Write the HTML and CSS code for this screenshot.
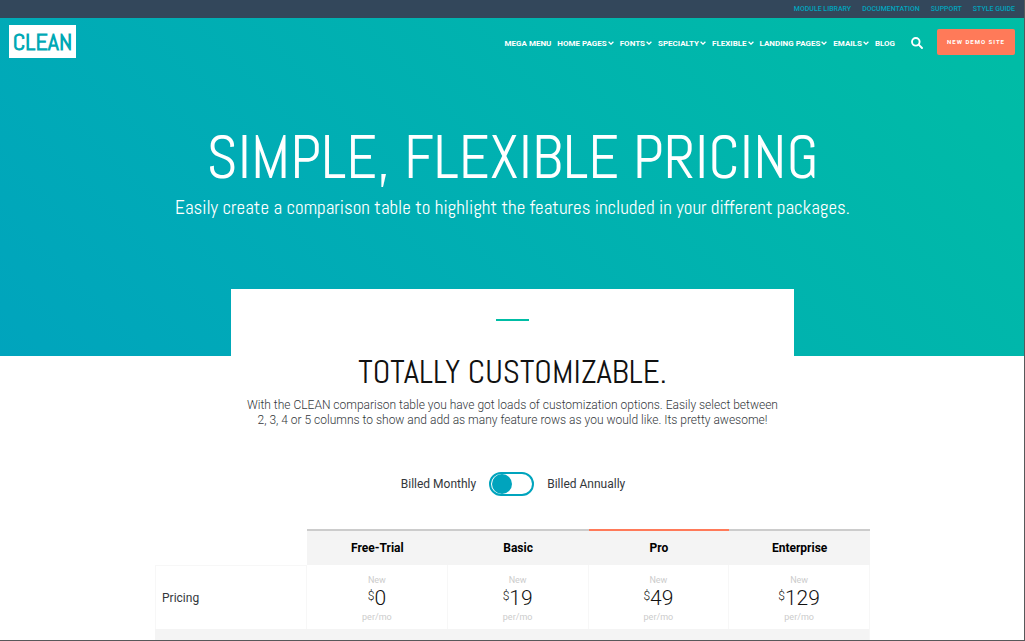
FILE: index.html
```html
<!DOCTYPE html>
<html lang="en">
<head>
<meta charset="utf-8">
<title>Clean – Pricing</title>
<link rel="stylesheet" href="styles.css">
</head>
<body>
<nav class="topbar" aria-label="Resources">
  <a href="#">Module Library</a>
  <a href="#">Documentation</a>
  <a href="#">Support</a>
  <a href="#">Style Guide</a>
</nav>
<div class="hero">
  <header class="header">
    <a class="logo" href="#">CLEAN</a>
    <nav class="menu" aria-label="Main">
      <a href="#">Mega Menu</a>
      <a href="#">Home Pages<svg class="caret" viewBox="0 0 6 4"><path d="M.6 .7 3 3.1 5.4 .7"/></svg></a>
      <a href="#">Fonts<svg class="caret" viewBox="0 0 6 4"><path d="M.6 .7 3 3.1 5.4 .7"/></svg></a>
      <a href="#">Specialty<svg class="caret" viewBox="0 0 6 4"><path d="M.6 .7 3 3.1 5.4 .7"/></svg></a>
      <a href="#">Flexible<svg class="caret" viewBox="0 0 6 4"><path d="M.6 .7 3 3.1 5.4 .7"/></svg></a>
      <a href="#">Landing Pages<svg class="caret" viewBox="0 0 6 4"><path d="M.6 .7 3 3.1 5.4 .7"/></svg></a>
      <a href="#">Emails<svg class="caret" viewBox="0 0 6 4"><path d="M.6 .7 3 3.1 5.4 .7"/></svg></a>
      <a href="#">Blog</a>
    </nav>
    <button class="search" type="button" aria-label="Search"><svg viewBox="0 0 12 12"><circle cx="4.8" cy="4.8" r="3.8"/><path d="M7.7 7.7 11 11"/></svg></button>
    <a class="cta" href="#">New Demo Site</a>
  </header>
  <div class="hero-text">
    <h1>Simple, Flexible Pricing</h1>
    <p>Easily create a comparison table to highlight the features included in your different packages.</p>
  </div>
</div>
<main>
  <section class="intro">
    <hr class="rule">
    <h2>Totally Customizable.</h2>
    <p>With the CLEAN comparison table you have got loads of customization options. Easily select between 2, 3, 4 or 5 columns to show and add as many feature rows as you would like. Its pretty awesome!</p>
  </section>
  <div class="billing">
    <label for="annual">Billed Monthly</label>
    <input class="switch" id="annual" type="checkbox" role="switch">
    <label for="annual">Billed Annually</label>
  </div>
  <table class="plans">
    <thead>
      <tr><td></td><th scope="col">Free-Trial</th><th scope="col">Basic</th><th class="featured" scope="col">Pro</th><th scope="col">Enterprise</th></tr>
    </thead>
    <tbody>
      <tr>
        <th scope="row">Pricing</th>
        <td><small>New</small><div class="price"><span>$</span>0</div><small>per/mo</small></td>
        <td><small>New</small><div class="price"><span>$</span>19</div><small>per/mo</small></td>
        <td><small>New</small><div class="price"><span>$</span>49</div><small>per/mo</small></td>
        <td><small>New</small><div class="price"><span>$</span>129</div><small>per/mo</small></td>
      </tr>
      <tr class="group"><td colspan="5"></td></tr>
    </tbody>
  </table>
</main>
</body>
</html>
```
FILE: styles.css
```css
* { box-sizing: border-box; }
body {
  margin: 0;
  background: #fff;
  color: #33373b;
  font-family: Roboto, "Liberation Sans", sans-serif;
}
body::after {
  content: "";
  position: fixed;
  inset: 0;
  border: solid #58585a;
  border-width: 0 1px 1px 0;
  pointer-events: none;
}
a { text-decoration: none; }
h1, h2, p { margin: 0; }
h1, h2, .hero-text p, .logo {
  font-family: "Abel", "Liberation Sans Narrow", Roboto, sans-serif;
}
.topbar {
  display: flex;
  justify-content: flex-end;
  gap: 11px;
  padding: 1px 10px 0;
  background: #33475b;
  font-size: 7px;
  font-weight: 500;
  line-height: 17px;
  text-transform: uppercase;
}
.topbar a { color: #00a4bd; }
.hero {
  height: 338px;
  background: linear-gradient(45deg, #00a4bd, #00bda5);
  color: #fff;
}
.header {
  display: flex;
  align-items: center;
  padding: 7px 10px 0 9px;
}
.logo {
  width: 67px;
  background: #fff;
  color: #00a9b5;
  font-size: 24px;
  font-weight: 700;
  line-height: 33px;
  text-align: center;
}
.menu {
  display: flex;
  gap: 6px;
  margin-left: auto;
  padding-top: 5px;
  font-size: 8px;
  font-weight: 700;
  line-height: 12px;
  text-transform: uppercase;
  white-space: nowrap;
}
.menu a { color: #fff; }
.caret {
  width: 6px;
  height: 4px;
  margin-left: 1px;
  vertical-align: 1px;
  fill: none;
  stroke: #fff;
  stroke-width: 1.3;
}
.search {
  width: 12px;
  height: 12px;
  margin: 2px 14px 0 16px;
  padding: 0;
  border: 0;
  background: none;
}
.search svg {
  display: block;
  fill: none;
  stroke: #fff;
  stroke-width: 1.9;
  stroke-linecap: round;
}
.cta {
  padding: 0 10px;
  border-radius: 2px;
  background: #ff7a59;
  color: #fff;
  font-size: 6px;
  font-weight: 700;
  line-height: 26px;
  letter-spacing: 1px;
  text-transform: uppercase;
}
.hero-text {
  padding-top: 64px;
  text-align: center;
}
h1 {
  font-size: 60px;
  font-weight: 300;
  line-height: 72px;
  text-transform: uppercase;
}
.hero-text p {
  font-size: 19px;
  font-weight: 300;
  line-height: 28px;
}
.intro {
  width: 55%;
  min-width: 320px;
  margin: -67px auto 0;
  padding: 30px 16px 0;
  background: #fff;
  text-align: center;
}
.rule {
  width: 33px;
  height: 2px;
  margin: 0 auto;
  border: 0;
  background: #00bda5;
}
h2 {
  padding-top: 31px;
  color: #111;
  font-size: 33px;
  font-weight: 300;
  line-height: 40px;
  text-transform: uppercase;
}
.intro p {
  padding-top: 6px;
  font-size: 12px;
  font-weight: 300;
  line-height: 15px;
}
.billing {
  display: flex;
  justify-content: center;
  align-items: center;
  gap: 13px;
  margin-top: 44px;
  padding-left: 1px;
  font-size: 12px;
  line-height: 24px;
}
.switch {
  display: flex;
  align-items: center;
  appearance: none;
  width: 45px;
  height: 24px;
  margin: 0;
  padding: 0 1px;
  border: 2px solid #00a4bd;
  border-radius: 12px;
}
.switch::before {
  content: "";
  width: 20px;
  height: 20px;
  border-radius: 50%;
  background: #00a4bd;
}
.switch:checked { justify-content: flex-end; }
.plans {
  width: 100%;
  max-width: 715px;
  margin: 33px auto 0;
  border-collapse: separate;
  border-spacing: 0;
  table-layout: fixed;
}
.plans td, .plans th { padding: 0; text-align: center; }
.plans thead td { width: 152px; }
.plans thead th {
  height: 36px;
  border-top: 2px solid #ccc;
  background: #f4f4f4;
  color: #000;
  font-size: 12px;
  font-weight: 700;
}
.plans thead th.featured { border-color: #ff7a59; }
.plans tbody th, .plans tbody td {
  height: 64px;
  border-right: 1px solid #f7f7f7;
}
.plans tbody td { padding-top: 2px; }
.plans tbody th {
  padding-left: 6px;
  border-top: 1px solid #f7f7f7;
  border-left: 1px solid #f7f7f7;
  font-size: 12px;
  font-weight: 400;
  text-align: left;
}
.plans small {
  display: block;
  color: #ccc;
  font-size: 9px;
  font-weight: 400;
  line-height: 12px;
}
.price {
  color: #111;
  font-size: 21px;
  font-weight: 300;
  line-height: 25px;
}
.price span {
  font-size: 12px;
  vertical-align: 5px;
  line-height: 12px;
}
.plans tbody .group td {
  height: 11px;
  background: #f4f4f4;
}
```
